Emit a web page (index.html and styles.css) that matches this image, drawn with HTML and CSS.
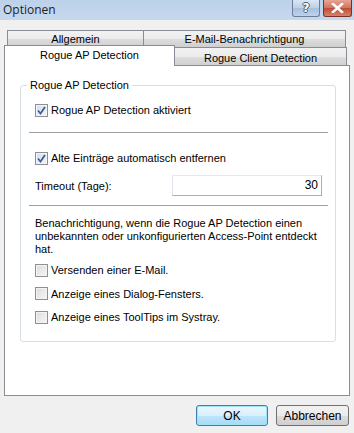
FILE: index.html
```html
<!DOCTYPE html>
<html lang="de">
<head>
    <meta charset="UTF-8">
    <title>Optionen</title>
    <link rel="stylesheet" href="styles.css">
</head>
<body>
    <div class="window">
        <div class="titlebar">
            <span class="title">Optionen</span>
            <div class="caption-buttons">
                <span class="cap-btn help">?</span>
                <span class="cap-btn close">
                    <svg width="13" height="10" viewBox="0 0 13 10"><path d="M2 1 L11 9 M11 1 L2 9" stroke="#fff" stroke-width="2.6" stroke-linecap="square"/></svg>
                </span>
            </div>
        </div>

        <div class="tabs">
            <div class="tab-row back">
                <div class="tab t-allg">Allgemein</div>
                <div class="tab t-mail">E-Mail-Benachrichtigung</div>
            </div>
            <div class="tab-row front">
                <div class="tab t-ap active">Rogue AP Detection</div>
                <div class="tab t-client">Rogue Client Detection</div>
            </div>
        </div>

        <div class="panel">
            <fieldset class="group">
                <legend>Rogue AP Detection</legend>

                <label class="check row-first">
                    <span class="box checked"><svg width="9" height="9" viewBox="0 0 9 9"><path d="M1 4.5 L3.5 7.5 L8 1" fill="none" stroke="#3a5ea8" stroke-width="1.8"/></svg></span>
                    Rogue AP Detection aktiviert
                </label>

                <div class="sep sep-one"></div>

                <label class="check">
                    <span class="box checked"><svg width="9" height="9" viewBox="0 0 9 9"><path d="M1 4.5 L3.5 7.5 L8 1" fill="none" stroke="#3a5ea8" stroke-width="1.8"/></svg></span>
                    Alte Einträge automatisch entfernen
                </label>

                <div class="field">
                    <span>Timeout (Tage):</span>
                    <div class="textbox">30</div>
                </div>

                <div class="sep sep-two"></div>

                <p class="note">Benachrichtigung, wenn die Rogue AP Detection einen unbekannten oder unkonfigurierten Access-Point entdeckt hat.</p>

                <label class="check opt">
                    <span class="box"></span>
                    Versenden einer E-Mail.
                </label>
                <label class="check opt">
                    <span class="box"></span>
                    Anzeige eines Dialog-Fensters.
                </label>
                <label class="check opt">
                    <span class="box"></span>
                    Anzeige eines ToolTips im Systray.
                </label>
            </fieldset>
        </div>

        <div class="actions">
            <button class="btn default">OK</button>
            <button class="btn">Abbrechen</button>
        </div>
    </div>
</body>
</html>
```

FILE: styles.css
```css
body {
    margin: 0;
    font-family: "Liberation Sans", Arial, sans-serif;
    font-size: 11px;
    color: #000;
    background-color: #f0f0f0;
}
.window {
    width: 354px;
    height: 433px;
    display: flex;
    flex-direction: column;
    background-color: #f0f0f0;
}
.titlebar {
    height: 20px;
    display: flex;
    justify-content: space-between;
    background: linear-gradient(#bcd1ea, #c6d8ee);
}
.title {
    font-family: "Open Sans", sans-serif;
    font-size: 12px;
    line-height: 20px;
    padding-left: 3px;
    color: #1e1e1e;
}
.caption-buttons {
    display: flex;
    gap: 3px;
    padding-right: 2px;
}
.cap-btn {
    width: 28px;
    height: 17px;
    box-sizing: border-box;
    border: 1px solid #6d7f98;
    border-top: none;
    border-radius: 0 0 3px 3px;
    display: flex;
    align-items: center;
    justify-content: center;
}
.help {
    background: linear-gradient(#d9e6f4 0%, #bcd0e8 50%, #a9c0dd 51%, #bcd3ec 100%);
    color: #fff;
    font-family: "DejaVu Sans", sans-serif;
    font-weight: bold;
    font-size: 12px;
    text-shadow: 1px 0 0 #42587a, -1px 0 0 #42587a, 0 1px 0 #42587a, 0 -1px 0 #42587a;
}
.close {
    width: 29px;
    border-color: #7a2f2a;
    background: linear-gradient(#e8a593 0%, #d0735d 50%, #c04a33 51%, #d7826a 100%);
}
.tabs {
    padding-top: 10px;
    display: flex;
    flex-direction: column;
}
.tab-row {
    display: flex;
}
.tab {
    box-sizing: border-box;
    text-align: center;
    border: 1px solid #898c95;
    border-bottom: none;
    background: linear-gradient(#f2f2f2 0%, #ebebeb 50%, #dddddd 51%, #cfcfcf 100%);
}
.back {
    padding-left: 7px;
    height: 17px;
}
.back .tab {
    height: 17px;
    line-height: 17px;
}
.t-allg { width: 137px; }
.t-mail { width: 203px; margin-left: -1px; }
.front {
    padding-left: 4px;
    height: 20px;
    margin-top: -1px;
    margin-bottom: -1px;
    align-items: flex-end;
}
.t-ap {
    width: 171px;
    height: 21px;
    line-height: 19px;
    background: #fff;
    position: relative;
    z-index: 1;
}
.t-client {
    width: 173px;
    height: 19px;
    line-height: 20px;
    margin-left: -1px;
}
.panel {
    margin: 0 4px;
    height: 331px;
    box-sizing: border-box;
    background: #fff;
    border: 1px solid #898c95;
    padding: 12px 0 0 15px;
}
.group {
    width: 316px;
    height: 264px;
    box-sizing: border-box;
    margin: 0;
    padding: 0 9px 0 14px;
    border: 1px solid #d5dfe5;
    border-radius: 3px;
}
.group legend {
    padding: 0 3px;
    margin-left: -8px;
    line-height: 14px;
}
.check {
    display: flex;
    align-items: center;
    gap: 3px;
    height: 14px;
}
.row-first {
    margin-top: 11px;
}
.box {
    width: 13px;
    height: 13px;
    box-sizing: border-box;
    border: 1px solid #8e8f8f;
    background: linear-gradient(135deg, #dcdcdc, #f6f6f6);
    box-shadow: inset 0 0 0 1px #f4f4f4;
    display: flex;
    align-items: center;
    justify-content: center;
}
.box.checked {
    background: linear-gradient(135deg, #d8dde4, #f4f6f8);
}
.sep {
    height: 1px;
    background: #a0a0a0;
    margin-right: -2px;
    margin-left: -6px;
}
.sep-one {
    margin-top: 15px;
    margin-bottom: 18px;
}
.field {
    display: flex;
    justify-content: space-between;
    align-items: center;
    margin-top: 10px;
    padding-right: 4px;
}
.textbox {
    width: 150px;
    height: 21px;
    box-sizing: border-box;
    border: 1px solid #abadb3;
    border-top-color: #e3e9ef;
    border-left-color: #e2e3ea;
    text-align: right;
    line-height: 19px;
    padding-right: 3px;
    font-size: 12px;
}
.sep-two {
    margin-top: 9px;
}
.note {
    margin: 11px 0 0 0;
    line-height: 13px;
    width: 290px;
}
.opt {
    margin-top: 7px;
}
.opt + .opt {
    margin-top: 9.5px;
}
.actions {
    display: flex;
    justify-content: flex-end;
    gap: 8px;
    padding: 9px 5px 0 0;
}
.btn {
    height: 21px;
    box-sizing: border-box;
    font-family: "Liberation Sans", Arial, sans-serif;
    font-size: 12px;
    border: 1px solid #707070;
    border-radius: 3px;
    background: linear-gradient(#f2f2f2 0%, #ebebeb 50%, #dddddd 51%, #cfcfcf 100%);
    padding: 0;
    width: 73px;
}
.btn.default {
    width: 72px;
    border-color: #3c7fb1;
    background: linear-gradient(#eaf6fd 0%, #d9f0fc 50%, #bee6fd 51%, #a7d9f5 100%);
    box-shadow: inset 0 0 0 1px #9ee3f8;
}
```
